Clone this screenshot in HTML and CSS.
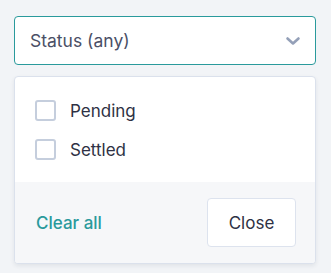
FILE: index.html
```html
<!DOCTYPE html>
<html>
<head>
<meta charset="utf-8">
<link rel="stylesheet" href="styles.css">
</head>
<body>
<div class="wrap">
  <div class="select">
    <span class="select-label">Status (any)</span>
    <svg class="chev" width="20" height="20" viewBox="0 0 20 20"><path d="M4.5 7.5 L10 12.5 L15.5 7.5" fill="none" stroke="#94a0b8" stroke-width="2.6" stroke-linecap="round" stroke-linejoin="round"/></svg>
  </div>
  <div class="panel">
    <div class="list">
      <label class="row"><span class="box"></span><span class="txt">Pending</span></label>
      <label class="row"><span class="box"></span><span class="txt">Settled</span></label>
    </div>
    <div class="footer">
      <span class="clear">Clear all</span>
      <span class="btn">Close</span>
    </div>
  </div>
</div>
</body>
</html>
```
FILE: styles.css
```css
* { box-sizing: border-box; }
html, body { margin: 0; padding: 0; }
body {
  background: #f2f4f7;
  font-family: Inter, "Noto Sans", sans-serif;
  width: 331px;
  height: 273px;
  overflow: hidden;
}
.wrap {
  padding: 16px 15px 0 14px;
  display: flex;
  flex-direction: column;
  gap: 11px;
}
.select {
  height: 49px;
  border: 1px solid #2a9a9c;
  border-radius: 4px;
  background: #fff;
  display: flex;
  align-items: center;
  justify-content: space-between;
  padding: 0 12px 0 15px;
}
.select-label {
  font-size: 17.5px;
  color: #4a4f66;
}
.chev { display: block; }
.panel {
  border: 1px solid #dbe1ec;
  border-radius: 4px;
  background: #fff;
  overflow: hidden;
  box-shadow: 0 2px 4px rgba(30, 40, 70, 0.08);
}
.list {
  padding: 14px 20px 13px 20px;
  display: flex;
  flex-direction: column;
}
.row {
  height: 39px;
  display: flex;
  align-items: center;
  gap: 14px;
}
.box {
  width: 21px;
  height: 21px;
  border: 2px solid #c5cedd;
  border-radius: 3px;
  background: #fff;
}
.txt {
  font-size: 17px;
  color: #2e3144;
}
.footer {
  background: #f6f7f9;
  height: 81px;
  display: flex;
  align-items: center;
  justify-content: space-between;
  padding: 0 19px 0 21px;
}
.clear {
  color: #2a9a9c;
  font-size: 17px;
  font-weight: 500;
}
.btn {
  width: 89px;
  height: 49px;
  background: #fff;
  border: 1px solid #dde3ee;
  border-radius: 4px;
  display: flex;
  align-items: center;
  justify-content: center;
  font-size: 17px;
  color: #2e3144;
}
```
